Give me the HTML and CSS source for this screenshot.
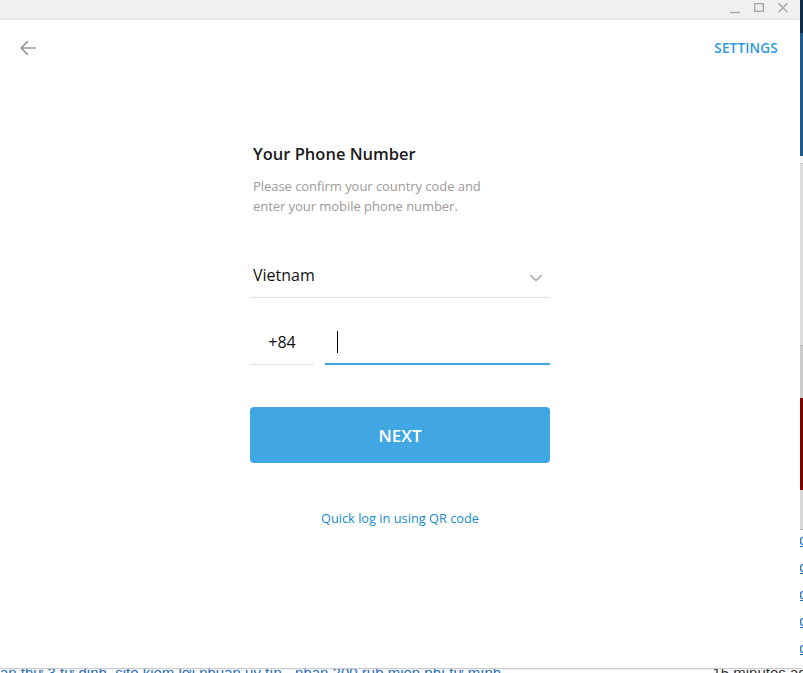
FILE: index.html
```html
<!DOCTYPE html>
<html lang="en">
<head>
<meta charset="utf-8">
<title>Telegram</title>
<link rel="stylesheet" href="styles.css">
</head>
<body>
<div class="desktop">
  <div class="window">
    <div class="titlebar">
      <span class="ctl">
        <svg width="12" height="12" viewBox="0 0 12 12"><path d="M1 10.5H11" stroke="#a8a8a8" stroke-width="1.4" fill="none"/></svg>
      </span>
      <span class="ctl">
        <svg width="12" height="12" viewBox="0 0 12 12"><rect x="1.7" y="1.7" width="8.6" height="7.6" stroke="#a8a8a8" stroke-width="1.4" fill="none"/></svg>
      </span>
      <span class="ctl">
        <svg width="12" height="12" viewBox="0 0 12 12"><path d="M1.5 1.2L10.5 10.2M10.5 1.2L1.5 10.2" stroke="#a8a8a8" stroke-width="1.4" fill="none"/></svg>
      </span>
    </div>
    <div class="header">
      <span class="back">
        <svg width="18" height="18" viewBox="0 0 18 18"><path d="M17 9H2.5M9 2.2L2.2 9 9 15.8" stroke="#9a9a9a" stroke-width="1.7" fill="none"/></svg>
      </span>
      <span class="settings">SETTINGS</span>
    </div>
    <div class="form">
      <h1 class="title">Your Phone Number</h1>
      <p class="desc">Please confirm your country code and<br>enter your mobile phone number.</p>
      <div class="country">
        <span class="country-name">Vietnam</span>
        <svg class="chev" width="14" height="8" viewBox="0 0 14 8"><path d="M1.2 1.2L7 6.6 12.8 1.2" stroke="#b0b0b0" stroke-width="1.6" fill="none"/></svg>
      </div>
      <div class="phone-row">
        <div class="code">+84</div>
        <div class="phone"><span class="caret"></span></div>
      </div>
      <button class="next">NEXT</button>
      <a class="qr">Quick log in using QR code</a>
    </div>
  </div>
  <div class="strip">
    <div class="s-dark"></div>
    <div class="s-blue"></div>
    <div class="s-white"></div>
    <div class="s-light"></div>
    <div class="s-mid"></div>
    <div class="s-red"></div>
    <div class="s-grey"></div>
    <div class="s-links">
      <span>o</span><span>o</span><span>o</span><span>o</span><span>o</span>
    </div>
  </div>
  <div class="bottom">
    <span class="b-left">ấn thứ 3 tự đinh, site kiếm lợi nhuận uy tín - nhận 200 rub miễn phí từ mình</span>
    <span class="b-right">15 minutes ago</span>
  </div>
</div>
</body>
</html>
```

FILE: styles.css
```css
html, body {
  margin: 0;
  padding: 0;
  background: #ffffff;
  overflow: hidden;
}

.desktop {
  width: 803px;
  height: 673px;
  display: grid;
  grid-template-columns: 800px 3px;
  grid-template-rows: 668px 5px;
  overflow: hidden;
  background: #ffffff;
}

.window {
  grid-column: 1;
  grid-row: 1;
  background: #ffffff;
  display: flex;
  flex-direction: column;
  box-shadow: 0 1px 0 #c9ccd0;
  position: relative;
  z-index: 1;
  font-family: "Open Sans", "Noto Sans", sans-serif;
}

.titlebar {
  height: 19px;
  background: #f0f0f0;
  border-bottom: 1px solid #e4e4e4;
  display: flex;
  justify-content: flex-end;
  align-items: flex-start;
  padding-right: 11px;
  gap: 12px;
}

.ctl {
  width: 12px;
  height: 12px;
  margin-top: 2px;
  display: flex;
}

.header {
  height: 56px;
  display: flex;
  align-items: center;
  justify-content: space-between;
  padding: 0 22px 0 19px;
}

.back {
  display: flex;
  width: 18px;
  height: 18px;
}

.settings {
  color: #2a9ae2;
  font-size: 13.5px;
  font-weight: 600;
  letter-spacing: 0.2px;
}

.form {
  width: 300px;
  margin: 0 auto;
  display: flex;
  flex-direction: column;
}

.title {
  margin: 67px 0 0 3px;
  font-size: 16.5px;
  font-weight: 600;
  line-height: 22px;
  color: #1a1a1a;
}

.desc {
  margin: 11px 0 0 3px;
  font-size: 13px;
  line-height: 20px;
  color: #a09a98;
  letter-spacing: -0.05px;
}

.country {
  margin-top: 37px;
  height: 44px;
  border-bottom: 1px solid #e2e2e2;
  display: flex;
  align-items: center;
  justify-content: space-between;
  padding: 0 7px 0 3px;
}

.country-name {
  font-size: 16px;
  color: #111;
}

.chev {
  margin-top: 5px;
}

.phone-row {
  margin-top: 22px;
  display: flex;
  gap: 11px;
  height: 45px;
}

.code {
  width: 64px;
  height: 44px;
  border-bottom: 1px solid #e2e2e2;
  display: flex;
  align-items: center;
  justify-content: center;
  font-size: 16px;
  color: #111;
}

.phone {
  flex: 1;
  height: 43px;
  border-bottom: 2px solid #40a7e3;
  display: flex;
  align-items: center;
  padding-left: 12px;
}

.caret {
  width: 1px;
  height: 22px;
  background: #000;
}

.next {
  margin-top: 42px;
  height: 56px;
  border: none;
  border-radius: 4px;
  background: #40a7e3;
  color: #ffffff;
  font-family: "Open Sans", "Noto Sans", sans-serif;
  font-size: 17px;
  font-weight: 600;
  padding: 0;
  cursor: pointer;
}

.qr {
  margin-top: 45px;
  text-align: center;
  font-size: 12.8px;
  line-height: 20px;
  color: #168acd;
}

.strip {
  grid-column: 2;
  grid-row: 1;
  display: flex;
  flex-direction: column;
  overflow: hidden;
  font-family: "Liberation Sans", sans-serif;
}

.s-dark { height: 33px; background: #0e2b47; }
.s-blue { height: 123px; background: #1c5a89; }
.s-white { height: 7px; background: #f4f4f4; border-bottom: 1px solid #c8c8c8; }
.s-light { height: 181px; background: #dcdcdc; border-bottom: 1px solid #b8b8b8; }
.s-mid { height: 52px; background: #cccccc; }
.s-red { height: 92px; background: #7e0000; }
.s-grey { height: 39px; background: #d8d8d8; border-bottom: 1px solid #b0b0b0; }

.s-links {
  flex: 1;
  display: flex;
  flex-direction: column;
  margin-top: -4px;
}

.s-links span {
  height: 27px;
  font-size: 15px;
  line-height: 27px;
  color: #1e6fc0;
  text-decoration: underline;
  margin-left: -1px;
}

.bottom {
  grid-column: 1 / 3;
  grid-row: 2;
  display: flex;
  justify-content: space-between;
  overflow: hidden;
  font-family: "Liberation Sans", sans-serif;
  font-size: 15px;
  line-height: 16px;
  background: linear-gradient(#dfe3e8, #ffffff 3px);
}

.b-left {
  color: #2a6cb8;
  margin-top: -3px;
  white-space: nowrap;
}

.b-right {
  color: #333;
  margin-top: -3px;
  margin-right: -12px;
  white-space: nowrap;
}
```
